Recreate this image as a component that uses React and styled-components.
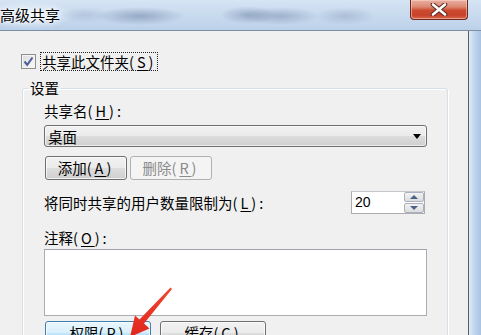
import React from "react";
import styled, { createGlobalStyle, css } from "styled-components";

const GlobalStyle = createGlobalStyle`
  html, body {
    margin: 0;
    padding: 0;
    overflow: hidden;
    background: #b9d1ea;
  }
  body {
    font-family: "Noto Sans CJK SC", "Liberation Sans", sans-serif;
    color: #000;
  }
`;

const Window = styled.div`
  position: relative;
  width: 481px;
  height: 335px;
  display: flex;
  flex-direction: column;
  overflow: hidden;
`;

const TitleBar = styled.div`
  height: 30px;
  flex-shrink: 0;
  display: flex;
  justify-content: space-between;
  align-items: flex-start;
  border-bottom: 1px solid #7d8fa5;
  background:
    radial-gradient(ellipse 28px 9px at 248px 15px, rgba(110, 130, 165, 0.5), transparent),
    radial-gradient(ellipse 45px 9px at 140px 16px, rgba(110, 130, 165, 0.55), transparent),
    radial-gradient(ellipse 40px 9px at 280px 16px, rgba(110, 130, 165, 0.45), transparent),
    radial-gradient(ellipse 25px 8px at 85px 15px, rgba(140, 160, 190, 0.35), transparent),
    radial-gradient(ellipse 30px 9px at 345px 16px, rgba(120, 140, 170, 0.35), transparent),
    radial-gradient(ellipse 45px 14px at 30px 15px, rgba(240, 246, 252, 0.9), transparent),
    linear-gradient(180deg, #d6e4f3 0%, #c7d9ee 55%, #bcd1e9 100%);
`;

const Title = styled.div`
  padding-top: 6px;
  font-size: 15px;
  line-height: 18px;
  text-shadow: 0 0 6px #fff, 0 0 3px #fff;
`;

const CloseButton = styled.div`
  width: 58px;
  height: 20px;
  margin-right: 13px;
  box-sizing: border-box;
  border: 1px solid #6a2a1e;
  border-top: none;
  border-radius: 0 0 4px 4px;
  background: linear-gradient(180deg, #eab0a2 0%, #dc8a75 35%, #cc4a2f 55%, #c8432a 80%, #d8644a 100%);
  box-shadow: inset 0 0 0 1px rgba(255, 220, 210, 0.5);
  display: flex;
  align-items: center;
  justify-content: center;
`;

const Main = styled.div`
  flex: 1;
  display: flex;
  min-height: 0;
`;

const Content = styled.div`
  width: 469px;
  flex-shrink: 0;
  box-sizing: border-box;
  padding: 21px 0 0 21px;
  background: #f0f0f0;
  border-right: 1px solid #4f5e72;
  font-size: 14.5px;
`;

const Frame = styled.div`
  flex: 1;
  background: linear-gradient(90deg, #e2ecf7 0%, #c2d7ee 40%, #a9c3e2 100%);
`;

const CheckRow = styled.div`
  display: flex;
  align-items: center;
  gap: 4px;
  height: 19px;
`;

const CheckBox = styled.div`
  width: 13px;
  height: 13px;
  border: 1px solid #8e8f8f;
  background: linear-gradient(135deg, #dcdcdc, #fafafa);
  box-shadow: inset 0 0 0 1px #f4f4f4;
  display: flex;
  align-items: center;
  justify-content: center;
`;

const FocusLabel = styled.span`
  border: 1px dotted #222;
  padding: 0 1px;
  line-height: 17px;
`;

// "(X)" access key group: wide brackets, underlined letter
const Paren = styled.span`
  letter-spacing: 3px;
`;

const Key = styled.span`
  text-decoration: underline;
  text-underline-offset: 2px;
`;

const Access = ({ k, colon }) => (
  <Paren>
    (<Key>{k}</Key>){colon ? ":" : ""}
  </Paren>
);

const Group = styled.fieldset`
  margin: 8px 0 0 1px;
  width: 426px;
  box-sizing: border-box;
  padding: 0;
  border: 1px solid #d5dfe5;
  border-radius: 3px;
  box-shadow: inset 1px 1px 0 #fff, 1px 1px 0 #fff;
  height: 280px;
`;

const Legend = styled.legend`
  margin-left: 5px;
  padding: 0 2px;
  line-height: 18px;
`;

const GroupBody = styled.div`
  padding: 5px 20px 0 21px;
  display: flex;
  flex-direction: column;
`;

const FieldLabel = styled.div`
  line-height: 18px;
  margin-top: ${(p) => p.$top || 0}px;
`;

const Combo = styled.div`
  margin-top: 5px;
  height: 22px;
  box-sizing: border-box;
  border: 1px solid #707070;
  border-radius: 3px;
  background: linear-gradient(180deg, #f2f2f2 0%, #ebebeb 50%, #dddddd 51%, #cfcfcf 100%);
  box-shadow: inset 0 0 0 1px rgba(255, 255, 255, 0.6);
  display: flex;
  align-items: center;
  justify-content: space-between;
  padding: 0 5px 0 3px;
`;

const Arrow = styled.div`
  width: 0;
  height: 0;
  border-left: 4px solid transparent;
  border-right: 4px solid transparent;
  border-top: 5px solid #000;
`;

const ButtonRow = styled.div`
  display: flex;
  gap: ${(p) => p.$gap}px;
  margin-top: ${(p) => p.$top}px;
  padding-left: 1px;
`;

const Button = styled.div`
  width: ${(p) => p.$w}px;
  height: 24px;
  box-sizing: border-box;
  border: 1px solid #707070;
  border-radius: 3px;
  background: linear-gradient(180deg, #f2f2f2 0%, #ebebeb 50%, #dddddd 51%, #cfcfcf 100%);
  box-shadow: inset 0 0 0 1px rgba(255, 255, 255, 0.7);
  display: flex;
  align-items: center;
  justify-content: center;
  line-height: 18px;
  ${(p) =>
    p.$disabled &&
    css`
      border-color: #adb2b5;
      background: #f4f4f4;
      color: #8a8a8a;
      box-shadow: none;
    `}
  ${(p) =>
    p.$hot &&
    css`
      border-color: #3c7fb1;
      background: linear-gradient(180deg, #eaf6fd 0%, #d9f0fc 50%, #bee6fd 51%, #a7d9f5 100%);
    `}
`;

const LimitRow = styled.div`
  display: flex;
  align-items: center;
  justify-content: space-between;
  margin-top: 11px;
  padding-right: 2px;
`;

const Spin = styled.div`
  display: flex;
  height: 23px;
  box-sizing: border-box;
  border: 1px solid #abadb3;
  border-top-color: #c4c6cc;
  background: #fff;
`;

const SpinText = styled.div`
  width: 49px;
  padding-left: 3px;
  font-family: "Liberation Sans", Arial, sans-serif;
  font-size: 14px;
  line-height: 21px;
`;

const SpinButtons = styled.div`
  width: 20px;
  display: flex;
  flex-direction: column;
  gap: 1px;
`;

const SpinButton = styled.div`
  flex: 1;
  box-sizing: border-box;
  border: 1px solid #a9b1c0;
  border-radius: 2px;
  background: linear-gradient(180deg, #f3f3f3, #dcdcdc);
  display: flex;
  align-items: center;
  justify-content: center;
`;

const Tri = styled.div`
  width: 0;
  height: 0;
  border-left: 4px solid transparent;
  border-right: 4px solid transparent;
  ${(p) => (p.$up ? "border-bottom: 4px solid #4d6185;" : "border-top: 4px solid #4d6185;")}
`;

const Notes = styled.div`
  margin-top: 2px;
  height: 67px;
  box-sizing: border-box;
  border: 1px solid #abadb3;
  border-top-color: #a0a3aa;
  background: #fff;
`;

const Pointer = styled.svg`
  position: absolute;
  left: 0;
  top: 0;
  pointer-events: none;
`;

export default function App() {
  return (
    <>
      <GlobalStyle />
      <Window>
        <TitleBar>
          <Title>高级共享</Title>
          <CloseButton>
            <svg width="18" height="13" viewBox="0 0 18 13">
              <path
                d="M3 1.5 L15 11.5 M15 1.5 L3 11.5"
                stroke="#5a2a22"
                strokeWidth="4.6"
                strokeLinecap="round"
              />
              <path
                d="M3 1.5 L15 11.5 M15 1.5 L3 11.5"
                stroke="#fff"
                strokeWidth="2.6"
                strokeLinecap="round"
              />
            </svg>
          </CloseButton>
        </TitleBar>
        <Main>
          <Content>
            <CheckRow>
              <CheckBox>
                <svg width="11" height="11" viewBox="0 0 11 11">
                  <path d="M1.5 5.5 L4.2 8.8 L9.5 1.5" fill="none" stroke="#4a5f97" strokeWidth="2" />
                </svg>
              </CheckBox>
              <FocusLabel>
                共享此文件夹<Access k="S" />
              </FocusLabel>
            </CheckRow>
            <Group>
              <Legend>设置</Legend>
              <GroupBody>
                <FieldLabel>
                  共享名<Access k="H" colon />
                </FieldLabel>
                <Combo>
                  <span>桌面</span>
                  <Arrow />
                </Combo>
                <ButtonRow $gap={3} $top={9}>
                  <Button $w={82}>
                    添加<Access k="A" />
                  </Button>
                  <Button $w={82} $disabled>
                    删除<Access k="R" />
                  </Button>
                </ButtonRow>
                <LimitRow>
                  <span>
                    将同时共享的用户数量限制为<Access k="L" colon />
                  </span>
                  <Spin>
                    <SpinText>20</SpinText>
                    <SpinButtons>
                      <SpinButton>
                        <Tri $up />
                      </SpinButton>
                      <SpinButton>
                        <Tri />
                      </SpinButton>
                    </SpinButtons>
                  </Spin>
                </LimitRow>
                <FieldLabel $top={15}>
                  注释<Access k="O" colon />
                </FieldLabel>
                <Notes />
                <ButtonRow $gap={9} $top={5}>
                  <Button $w={106} $hot>
                    权限<Access k="P" />
                  </Button>
                  <Button $w={106}>
                    缓存<Access k="C" />
                  </Button>
                </ButtonRow>
              </GroupBody>
            </Group>
          </Content>
          <Frame />
        </Main>
        <Pointer width="481" height="335" viewBox="0 0 481 335">
          <defs>
            <linearGradient id="red" x1="0" y1="0" x2="0" y2="1">
              <stop offset="0" stopColor="#f0452f" />
              <stop offset="1" stopColor="#e0261c" />
            </linearGradient>
          </defs>
          <polygon
            points="170.5,287.5 172,289 144,323.5 149.5,328.5 130,337 135,315.5 139.5,319.5"
            fill="url(#red)"
          />
        </Pointer>
      </Window>
    </>
  );
}
